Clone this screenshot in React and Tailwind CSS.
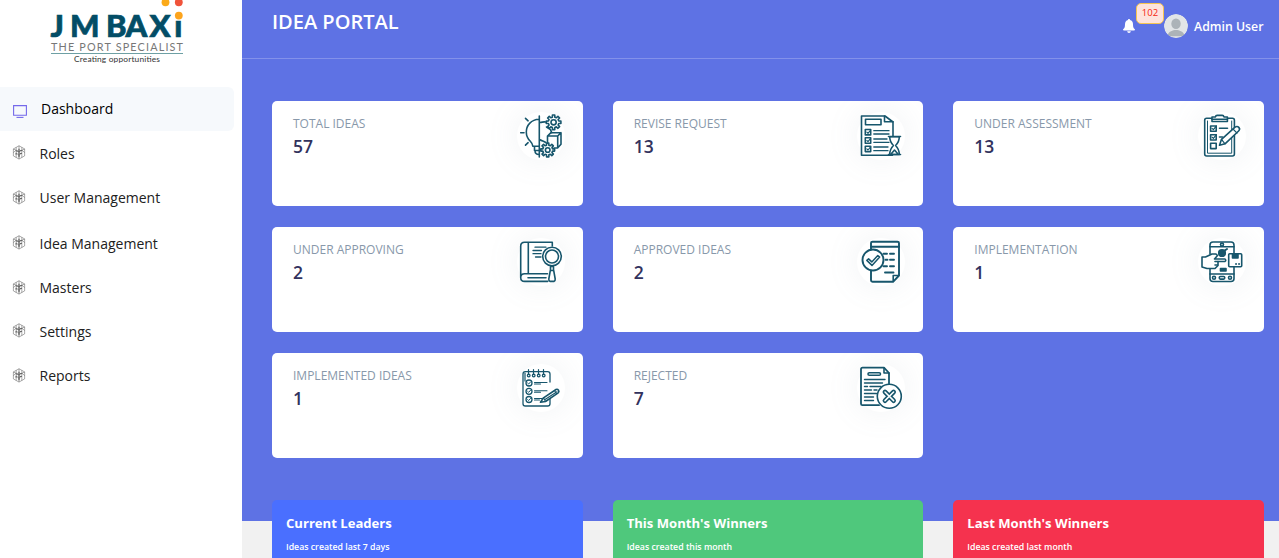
import React from "react";

function gear(cx, cy, outer, inner, teeth = 8) {
  const pts = [];
  const step = (Math.PI * 2) / teeth;
  for (let i = 0; i < teeth; i++) {
    const a = i * step;
    [
      [-0.3, inner],
      [-0.2, outer],
      [0.2, outer],
      [0.3, inner],
    ].forEach(([k, r]) => {
      pts.push(
        (cx + Math.cos(a + k * step) * r).toFixed(2) +
          " " +
          (cy + Math.sin(a + k * step) * r).toFixed(2)
      );
    });
  }
  return "M" + pts.join("L") + "Z";
}

function CardIcon({ children }) {
  return (
    <div className="size-12 rounded-full bg-white shadow-[0_0_32px_rgba(136,152,170,0.13)]">
      <svg
        viewBox="0 0 48 48"
        className="size-12"
        fill="none"
        stroke="#17566c"
        strokeWidth="1.6"
        strokeLinecap="round"
        strokeLinejoin="round"
      >
        {children}
      </svg>
    </div>
  );
}

const icons = {
  idea: (
    <>
      <path d="M22.3 4v41M22 7.3C14.5 7.6 9.3 13 9.3 20.2c0 4.2 1.6 6.6 4 9 2 2 2.3 3.2 2.5 5H22M17.5 34.3v4.2H22M18 38.5c0 2.6 1.6 4 4 4" />
      <path d="M3.7 20.7H7M8.5 6.3l2.6 2.5M8.5 33.2l2.6-2.5" />
      <path d="M23 10.5c2.5-.2 3.600-1 5.500-.5M29.5 15l4 2.6 1.2 3M23 27.800c2.300 1.300 4 1.400 5.700 2.700" />
      <path d="M30.5 24v8M30.5 24l3.500-3.300h10v11.600L40.600 36H37M30.500 24h10.200L44 20.700M40.700 24v12" />
      <path d={gear(36.6, 10.3, 7.4, 5.3)} fill="#fff" />
      <circle cx="36.6" cy="10.3" r="2.6" />
      <path d={gear(30.7, 38, 7, 5)} fill="#fff" />
      <circle cx="30.7" cy="38" r="2.3" />
    </>
  ),
  revise: (
    <>
      <path d="M36 24V10l-8-6H4.5v39.3h31" />
      <path d="M27.5 4v5.700H36" />
      <path d="M8.500 7.300H24v5.500H8.500z" />
      <path d="M8.300 17.500h5.400v5.400H8.300zM8.300 25.800h5.400v5.400H8.300zM8.300 34.200h5.400v5.400H8.300z" />
      <path d="M9.800 20.200l1.200 1.100 2-2.400M9.800 28.500l1.200 1.100 2-2.400M9.800 36.900l1.200 1.100 2-2.400" strokeWidth="1.1" />
      <path d="M16.800 18.700H32M16.800 22H32M16.800 27H30M16.800 30.300H32M16.800 35H31M16.800 38.700H31" strokeWidth="1.3" />
      <path d="M32.700 24.700h9.600c0 4.500-1.400 6.400-3.700 8.800 2.300 2.400 3.700 4.700 3.700 9h-9.600c0-4.300 1.400-6.600 3.700-9-2.300-2.400-3.700-4.300-3.700-8.800z" fill="#fff" />
      <path d="M31.500 24.500h12M31.500 42.500h12M34.500 41.500l3-3.500 3 3.500" />
    </>
  ),
  assess: (
    <>
      <rect x="6.7" y="6.3" width="29.7" height="37.7" rx="2" />
      <path d="M9.500 9v32.200h24.200V9" strokeWidth="1" />
      <path d="M14 9.500V5h3.400c.2-1.300.6-1.600 1.800-1.600h5c1.200 0 1.600.3 1.800 1.600h3.400v4.500z" fill="#fff" />
      <path d="M14 7.300h15.400" />
      <path d="M12.600 14h5.600v5.300h-5.600zM12.600 22.700h5.600V28h-5.600zM12.600 31.300h5.600v5.300h-5.600z" />
      <path d="M14 16.400l1.400 1.200 3-3.600M14 25.100l1.400 1.200 3-3.600" strokeWidth="1.2" />
      <path d="M21.500 16.300h8M21.500 25h3" />
      <path d="M21.500 33.300l2-6L36.800 15.300q2.400-1.600 4 .1 1.700 1.800-.2 3.600L27 31.800z" fill="#fff" />
      <path d="M23.500 27.300l3.500 4.500M35 17l4 4.100" strokeWidth="1.2" />
    </>
  ),
  approving: (
    <>
      <path d="M35.300 8V4.200H7.600Q3.700 4.200 3.700 8v31.400q0 4 4 4h23M7.700 35.700q-4 0-4 3.900M7.700 35.700h22.800M11.300 4.400v31.200M11 39.700H29" />
      <path d="M18 9.200h11M16 12.500h8.500M16 15.700h8M18.500 19H24" strokeWidth="1.3" />
      <circle cx="35" cy="18.5" r="9.3" fill="#fff" />
      <circle cx="35" cy="18.5" r="6.5" />
      <path d="M33.500 28.500h3v4h-3zM33.300 32.500h3.400l1.500 8.500q.2 2-1.300 2.400h-3.800q-1.500-.4-1.300-2.400z" fill="#fff" />
    </>
  ),
  approved: (
    <>
      <path d="M14 13V5q0-1.300 1.500-1.300h25Q42 3.700 42 5v32.500l-5.700 6.200H15.500Q14 43.700 14 42.300V31" strokeWidth="1.9" />
      <path d="M14 8.700h28" strokeWidth="1.900" />
      <path d="M36.200 43.500v-6h5.600" />
      <path d="M26.500 15.800h3.500M33 15.800h4M28.500 21.800h2M33 21.800h4M26.500 28.200h3.500M33 28.200h4M28 34.500h8.500" strokeWidth="1.900" />
      <circle cx="16" cy="22" r="10.5" fill="#fff" strokeWidth="1.900" />
      <path d="M9.800 22.400l1.800-1.500 3.200 3 6-6.400 1.900 1.600-7.700 8.300z" strokeWidth="1.500" />
    </>
  ),
  implementation: (
    <>
      <path d="M12 16V7q0-3 3-3h18q3 0 3 3v8M36 28v12.500q0 3-3 3H15q-3 0-3-3V31" />
      <path d="M12 8.700h24M12 36h24" />
      <circle cx="24" cy="6.600" r="1.500" />
      <circle cx="16" cy="39.700" r="1.500" />
      <circle cx="32" cy="39.700" r="1.500" />
      <rect x="21.300" y="38.500" width="5.400" height="2.600" rx="1" />
      <circle cx="24" cy="15" r="3.300" fill="#17566c" />
      <path d="M26 13l3-2" strokeWidth="2" />
      <path d="M4 19h3.500l6.500-3h4l1.500 1.500-3 3.500h10.500q1.500 1.300 0 2.500H20v4l-3 3H9l-5-1.500z" fill="#fff" />
      <path d="M17 23.500h3M17 27h2.500" />
      <path d="M22.500 30.500h5.500v2.500h-5.500z" fill="#17566c" />
      <rect x="30.700" y="15.700" width="13" height="13" rx="1" fill="#fff" />
      <path d="M34.500 16h5.500v4h-5.500z" fill="#17566c" />
      <path d="M38 26h.1M41 26h.1" strokeWidth="1.800" />
    </>
  ),
  implemented: (
    <>
      <path d="M33 18V10q0-2.300-2.300-2.300H8.300Q6 7.700 6 10v29.700Q6 42 8.300 42h22.400q2.300 0 2.300-2.300V35" strokeWidth="1.300" />
      <path d="M8 9v8M11.500 5.500v5M16.500 5.500v5M21.500 5.500v5M26.500 5.500v5" strokeWidth="1.200" />
      <g strokeWidth="1.300">
        <circle cx="11.700" cy="11.500" r="1.300" />
        <circle cx="16.700" cy="11.500" r="1.300" />
        <circle cx="21.700" cy="11.500" r="1.300" />
        <circle cx="26.700" cy="11.500" r="1.300" />
        <circle cx="12" cy="19" r="3" />
        <circle cx="12" cy="27.300" r="3" />
        <circle cx="12" cy="35.500" r="3" />
      </g>
      <path d="M10.600 19l1.100 1 1.800-2M10.600 27.300l1.100 1 1.800-2M10.600 35.500l1.100 1 1.800-2" strokeWidth="1" />
      <path d="M17.500 18.500H30M17.500 20h6M17.500 26.800H30M17.500 28.300h6M17.500 34.500h8M17.500 36h5" strokeWidth="1.100" />
      <path d="M23.500 38.300l3-4.500L39 25.500q1.500-.7 2.500.8 1 1.500-.3 2.500L28.500 37.500z" fill="#fff" />
      <path d="M28 35.500l12-7.800M26.500 33.800l2 3.700M37.500 26.500l2 3.300" strokeWidth="1.100" />
    </>
  ),
  rejected: (
    <>
      <path d="M32 19.500V9l-5-5.300H5.500q-1.500 0-1.500 1.500v34.500q0 1.500 1.500 1.500H22" strokeWidth="1.800" />
      <path d="M27 4v5h5" />
      <rect x="11" y="8.700" width="12.500" height="2.600" rx="1.300" />
      <path d="M7.500 15.500H28M7.500 19h18M7.500 22.500h3M13 22.500h11M7.500 26h7M17 26h3M7.500 29.500h12M7.500 33h9M7.500 36.500h9" strokeWidth="1.400" />
      <circle cx="32.300" cy="32.300" r="12" fill="#fff" />
      <path d="M28 28l8.600 8.600M36.600 28L28 36.600" strokeWidth="4.800" />
      <path d="M28 28l8.600 8.600M36.600 28L28 36.600" stroke="#fff" strokeWidth="1.500" />
    </>
  ),
};

const stats = [
  ["TOTAL IDEAS", "57", "idea"],
  ["REVISE REQUEST", "13", "revise"],
  ["UNDER ASSESSMENT", "13", "assess"],
  ["UNDER APPROVING", "2", "approving"],
  ["APPROVED IDEAS", "2", "approved"],
  ["IMPLEMENTATION", "1", "implementation"],
  ["IMPLEMENTED IDEAS", "1", "implemented"],
  ["REJECTED", "7", "rejected"],
];

function Logo() {
  return (
    <svg viewBox="0 0 140 68" className="ml-[47px] block h-[68px] w-[140px] shrink-0 font-[Lato,sans-serif]">
      <circle cx="118.500" cy="2.300" r="3.900" fill="#fbaa19" />
      <circle cx="131.800" cy="2.300" r="3.900" fill="#f0533a" />
      <text x="3.500 23 59 78.500 102.500 127.200" y="37.300" fontSize="31" fontWeight="900" fill="#034d66" stroke="#034d66" strokeWidth="0.700">JMBAXı</text>
      <circle cx="131.800" cy="15.600" r="3.900" fill="#fca41d" />
      <text x="4" y="51" fontSize="10.800" fill="#777" textLength="132" lengthAdjust="spacing">THE PORT SPECIALIST</text>
      <path d="M4 53.500h132" stroke="#6ea0a4" strokeWidth="1" />
      <text x="27" y="62.300" fontSize="8.400" fill="#333" textLength="86" lengthAdjust="spacing">Creating opportunities</text>
    </svg>
  );
}

function HexIcon() {
  return (
    <svg viewBox="0 0 14 16" className="-mt-0.5 h-[15px] w-[14px]" fill="none" stroke="#4a4a4a" strokeWidth="0.500">
      <path d="M7 .8l6 3.400v7.400l-6 3.400-6-3.400V4.200zM7 .8v14.200M1 4.200l6 3 6-3M4 2.500v10.800M10 2.500v10.800M1 8l3-2.500M4 8.500l3 2.500 3-2.500M10 5.500L13 8" />
      <path d="M7 4v9" strokeWidth="1.100" />
      <path d="M4 6.500h2M8 6h2M8 9h2M3 9.500h2" strokeWidth="0.900" />
    </svg>
  );
}

function NavItem({ label, className }) {
  return (
    <li className={"flex items-center pl-3 " + className}>
      <HexIcon />
      <span className="ml-[13.500px] text-[14px] leading-6">{label}</span>
    </li>
  );
}

function Sidebar() {
  return (
    <aside className="flex h-[558px] w-[242px] shrink-0 flex-col bg-white">
      <Logo />
      <ul className="mt-[19px] text-[#212121]">
        <li className="flex h-11 w-[234px] items-center rounded-r-md bg-[#f6f9fc] pl-[13px] text-black">
          <svg viewBox="0 0 14 13" className="mt-1 h-[13px] w-[14px]" fill="none" stroke="#7469ea" strokeWidth="1.100">
            <path d="M.6 .6h12.800v9.600H.6z" />
            <path d="M3.500 12.400h7" />
          </svg>
          <span className="ml-3.5 text-[14px] leading-6">Dashboard</span>
        </li>
        <NavItem label="Roles" className="h-[45px]" />
        <NavItem label="User Management" className="h-11" />
        <NavItem label="Idea Management" className="h-[47px]" />
        <NavItem label="Masters" className="h-[42px]" />
        <NavItem label="Settings" className="h-[45px]" />
        <NavItem label="Reports" className="h-11" />
      </ul>
    </aside>
  );
}

function Header() {
  return (
    <header className="flex h-[59px] items-start justify-between border-b border-[#8391ea] pr-[15px] pl-[30px] text-white">
      <h1 className="mt-[7px] text-[20px] leading-[30px] font-semibold">IDEA PORTAL</h1>
      <div className="flex items-start">
        <svg viewBox="0 0 12 14" className="mt-[19px] h-[14px] w-3" fill="#fff">
          <path d="M6 0c.7 0 1 .4 1 .9C9 1.400 10 3 10 5.200c0 3 .6 4 1.700 4.900.5.600.2 1.400-.6 1.400H.9c-.8 0-1.100-.8-.6-1.400C1.400 9.200 2 8.200 2 5.200 2 3 3 1.400 5 .9 5 .4 5.300 0 6 0zM4.200 12.200h3.600C7.700 13.200 7 13.900 6 13.900s-1.700-.7-1.800-1.700z" />
        </svg>
        <span className="mt-[3px] ml-[1px] flex h-[21px] w-7 items-center justify-center rounded-[5px] border border-[#f5c451] bg-[#fde3dd] text-[9.5px] text-[#f5260f]">
          102
        </span>
        <svg viewBox="0 0 24 24" className="mt-[14px] size-6 overflow-hidden rounded-full">
          <circle cx="12" cy="12" r="12" fill="#e2e5e7" />
          <ellipse cx="12" cy="9.700" rx="4.700" ry="5.300" fill="#acb3b8" />
          <path d="M3.800 20.700C5 17.500 8.500 16 12 16s7 1.500 8.200 4.700q-1.500 1.500-3 1.500H7q-2 0-3.200-1.500z" fill="#acb3b8" />
        </svg>
        <span className="mt-[17px] ml-[6px] w-[70px] text-[12.300px] leading-5 font-semibold whitespace-nowrap">Admin User</span>
      </div>
    </header>
  );
}

function StatCard({ title, value, icon }) {
  return (
    <section className="flex h-[105px] justify-between overflow-hidden rounded-[5px] bg-white pt-[11px] pr-[18px] pl-[21px]">
      <div className="pt-[3px]">
        <h2 className="text-[12px] leading-[18px] text-[#8898aa]">{title}</h2>
        <p className="text-[17.500px] leading-[26px] font-semibold text-[#32325d]">{value}</p>
      </div>
      <CardIcon>{icons[icon]}</CardIcon>
    </section>
  );
}

function BoardCard({ title, note, className }) {
  return (
    <section className={"h-[58px] rounded-t-[5px] px-3.5 pt-[13px] text-white " + className}>
      <h2 className="text-[13.100px] leading-5 font-bold">{title}</h2>
      <p className="mt-[7px] text-[8.750px] leading-[14px] font-semibold">{note}</p>
    </section>
  );
}

export default function App() {
  return (
    <div className="flex h-[558px] w-[1279px] overflow-hidden bg-white font-['Open_Sans',sans-serif]">
      <Sidebar />
      <main className="min-w-0 flex-1 bg-[linear-gradient(#5e72e4_521px,#f1f1f1_521px)]">
        <Header />
        <div className="grid grid-cols-3 gap-x-[30px] gap-y-[21px] pt-[42px] pr-[15px] pl-[30px]">
          {stats.map(([title, value, icon]) => (
            <StatCard key={title} title={title} value={value} icon={icon} />
          ))}
        </div>
        <div className="mt-[42px] grid grid-cols-3 gap-x-[30px] pr-[15px] pl-[30px]">
          <BoardCard title="Current Leaders" note="Ideas created last 7 days" className="bg-[#4a6fff]" />
          <BoardCard title="This Month's Winners" note="Ideas created this month" className="bg-[#4fc87c]" />
          <BoardCard title="Last Month's Winners" note="Ideas created last month" className="bg-[#f5324e]" />
        </div>
      </main>
    </div>
  );
}
